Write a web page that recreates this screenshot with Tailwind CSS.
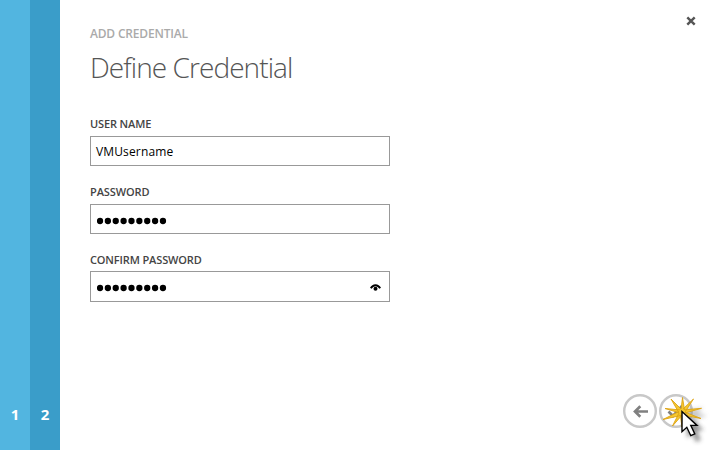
<!DOCTYPE html>
<html lang="en">
<head>
<meta charset="utf-8">
<title>Define Credential</title>
<script src="https://cdn.jsdelivr.net/npm/@tailwindcss/browser@4"></script>
</head>
<body class="h-[450px] w-[710px] overflow-hidden bg-white font-['Open_Sans','Noto_Sans',sans-serif]">
<div class="flex h-[450px] w-[710px]">
  <nav class="flex text-[15px] leading-5 font-bold text-white">
    <div class="flex w-[30px] items-end justify-center bg-[#52b5e0] pb-[26px]">1</div>
    <div class="flex w-[30px] items-end justify-center bg-[#3a9dc9] pb-[26px]">2</div>
  </nav>
  <main class="flex flex-1 flex-col pl-[30px]">
    <header class="flex h-[114px] justify-between">
      <div class="pt-[25px]">
        <p class="text-[12px] leading-[18px] font-semibold tracking-[-0.18px] whitespace-nowrap text-[#aaaaaa]">ADD CREDENTIAL</p>
        <h1 class="mt-[4px] text-[28px] leading-[40px] font-light tracking-[-0.93px] whitespace-nowrap text-[#555555]">Define Credential</h1>
      </div>
      <button class="mt-[16px] mr-[14px] flex size-[10px] items-center justify-center" aria-label="Close">
        <svg class="size-[10px]" viewBox="0 0 10 10"><path d="M1.3 1.3 8.7 8.7M8.7 1.3 1.3 8.7" stroke="#555" stroke-width="2.4"/></svg>
      </button>
    </header>
    <form class="flex w-[300px] flex-col text-[11px] font-semibold text-[#444444]">
      <label class="h-[22px] leading-5 tracking-[-0.13px]">USER NAME</label>
      <div class="flex h-[30px] items-center border border-[#999999] px-[5px] pt-[2px] text-[12px] font-normal tracking-[0.14px] text-black">VMUsername</div>
      <label class="mt-[16px] h-[22px] leading-5 tracking-[-0.1px]">PASSWORD</label>
      <div class="flex h-[30px] items-center border border-[#999999] px-[6px] pt-[3px]">
        <svg class="h-[8px] w-[72px]" viewBox="0 0 72 8"><path d="M3 4h63.1" stroke="#000" stroke-width="6.3" stroke-linecap="round" stroke-dasharray="0 7.87"/></svg>
      </div>
      <label class="mt-[16px] h-[21px] leading-5 tracking-[-0.13px]">CONFIRM PASSWORD</label>
      <div class="flex h-[31px] items-center justify-between border border-[#999999] pr-[8px] pl-[6px] pt-[2px]">
        <svg class="h-[8px] w-[72px]" viewBox="0 0 72 8"><path d="M3 4h63.1" stroke="#000" stroke-width="6.3" stroke-linecap="round" stroke-dasharray="0 7.87"/></svg>
        <svg class="h-[8px] w-[11px]" viewBox="0 0 11 8"><path d="M.8 4.3C3 .2 8 .2 10.2 4.3" fill="none" stroke="#000" stroke-width="1.9"/><circle cx="5.5" cy="4.8" r="2"/></svg>
      </div>
    </form>
    <footer class="mt-auto flex justify-end gap-[2px] pr-[17px] pb-[22px]">
      <button aria-label="Back"><svg class="size-[34px]" viewBox="0 0 34 34"><circle cx="17" cy="17" r="15.8" fill="#fff" stroke="#c8c8c8" stroke-width="2.4"/><path d="M25 17.5H12M17.3 12.2 12 17.5l5.3 5.3" fill="none" stroke="#808080" stroke-width="2.7"/></svg></button>
      <button aria-label="Complete"><svg class="size-[34px]" viewBox="0 0 34 34"><circle cx="17" cy="17" r="15.8" fill="#fff" stroke="#c8c8c8" stroke-width="2.4"/><path d="M9.5 17.5 14 22l9-10" fill="none" stroke="#808080" stroke-width="2.7"/></svg></button>
    </footer>
  </main>
</div>
<svg class="pointer-events-none absolute top-[390px] left-[655px] h-[60px] w-[55px]" viewBox="0 0 55 60">
  <defs><filter id="soft" x="-50%" y="-50%" width="200%" height="200%"><feGaussianBlur stdDeviation="2"/></filter></defs>
  <path d="m32 26 0 22 5-4 4 8 5-2-4-9 7-1z" fill="#333" opacity=".5" filter="url(#soft)"/>
  <path d="m30 15 9 5 9-3-5 6 9 3-12 3 5 8-9-2-2 4" fill="#777" opacity=".4" filter="url(#soft)"/>
  <g fill="#f5c832" stroke="#dca313" stroke-width=".9" stroke-linejoin="round">
    <path d="M26 20 27.5 7.5 29.5 20zM27 20 38.5 9 30 22zM28 20 46.5 18.3 30 23zM27 21 46 28.5 28 25zM27 23 38.5 35.5 31 23zM25 23 27 37 29 23zM24 23 17.5 36 28 24zM25 21 8 29.5 28 25zM26 20 10 18.5 25 23zM27 20 16 9 23.5 22z"/>
  </g>
  <circle cx="27" cy="22" r="3" fill="#f5c832"/>
  <path d="M27 21.5v20.2l4.8-4.4 4 8.4 4-1.8-4-8.5h6.2z" fill="#fff" stroke="#000" stroke-width="1.4"/>
</svg>
</body>
</html>
